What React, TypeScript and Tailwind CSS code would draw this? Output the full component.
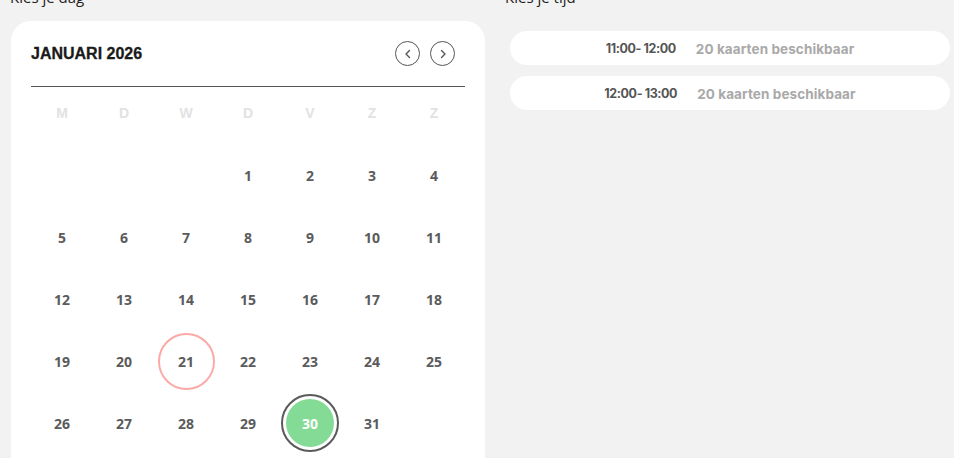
import React from "react";

// Day picker + time slot list
const weekDays = ["M", "D", "W", "D", "V", "Z", "Z"];

// January 2026 starts on a Thursday
const cells: (number | null)[] = [null, null, null, ...Array.from({ length: 31 }, (_, i) => i + 1)];

const timeSlots = [
  { time: "11:00- 12:00", available: "20 kaarten beschikbaar" },
  { time: "12:00- 13:00", available: "20 kaarten beschikbaar" },
];

const TODAY = 21;
const SELECTED = 30;

const NavButton: React.FC<{ dir: "prev" | "next" }> = ({ dir }) => (
  <button className="w-[25px] h-[25px] rounded-full border border-[#555] flex items-center justify-center bg-white">
    <svg width="10" height="10" viewBox="0 0 10 10" fill="none">
      <path
        d={dir === "prev" ? "M6.5 1.5 L3 5 L6.5 8.5" : "M3.5 1.5 L7 5 L3.5 8.5"}
        stroke="#555"
        strokeWidth="1.4"
        strokeLinecap="round"
        strokeLinejoin="round"
      />
    </svg>
  </button>
);

const DayCell: React.FC<{ day: number | null }> = ({ day }) => {
  if (day === null) return <div className="h-[62px]" />;

  if (day === SELECTED) {
    return (
      <div className="h-[62px] flex items-center justify-center">
        <div className="w-[58px] h-[58px] rounded-full border-2 border-[#5a5a5a] p-[3px]">
          <div className="w-full h-full rounded-full bg-[#84db96] flex items-center justify-center text-white">
            {day}
          </div>
        </div>
      </div>
    );
  }

  return (
    <div className="h-[62px] flex items-center justify-center">
      <div
        className={
          day === TODAY
            ? "w-[57px] h-[57px] rounded-full border-2 border-[#fbaaa8] flex items-center justify-center"
            : "w-[57px] h-[57px] flex items-center justify-center"
        }
      >
        {day}
      </div>
    </div>
  );
};

const Calendar: React.FC = () => (
  <div className="bg-white rounded-[20px] pt-5 px-5 pb-6">
    <div className="h-[25px] flex items-center justify-between mb-5">
      <h2 className="font-['Liberation_Sans',Arial,sans-serif] font-bold text-[16px] text-[#1a1a1a] [-webkit-text-stroke:0.3px_#1a1a1a]">
        JANUARI 2026
      </h2>
      <div className="flex gap-[10px] mr-[10px]">
        <NavButton dir="prev" />
        <NavButton dir="next" />
      </div>
    </div>

    <div className="border-t border-[#555]" />

    <div className="grid grid-cols-7 h-[52px] items-center font-['Liberation_Sans',Arial,sans-serif] font-bold text-[14px] text-[#e2e2e2]">
      {weekDays.map((d, i) => (
        <div key={i} className="text-center">
          {d}
        </div>
      ))}
    </div>

    <div className="grid grid-cols-7 mt-[5px] font-['Open_Sans',sans-serif] font-bold text-[14px] text-[#5b5b5b]">
      {cells.map((day, i) => (
        <DayCell key={i} day={day} />
      ))}
    </div>
  </div>
);

const TimeSlot: React.FC<{ time: string; available: string }> = ({ time, available }) => (
  <div className="h-[34px] bg-white rounded-full flex items-center justify-center gap-[20px] font-['Inter',sans-serif] font-bold pt-[3px]">
    <span className="text-[#555] text-[12.5px] tracking-[-0.4px]">{time}</span>
    <span className="text-[#a9a9a9] text-[13.5px] tracking-[0.1px]">{available}</span>
  </div>
);

export default function App() {
  return (
    <div className="w-[954px] h-[458px] bg-[#f2f2f2] overflow-hidden">
      <div className="flex -mt-[13px] font-['Open_Sans',sans-serif]">
        <div className="w-[474px] ml-[11px]">
          <div className="text-[15px] leading-5 text-[#222] -ml-[1px]">Kies je dag</div>
          <div className="mt-[14px]">
            <Calendar />
          </div>
        </div>

        <div className="ml-[20px] flex-1 pr-[4px]">
          <div className="text-[15px] leading-5 text-[#222]">Kies je tijd</div>
          <div className="mt-[24px] ml-[5px] flex flex-col gap-[11px]">
            {timeSlots.map((s) => (
              <TimeSlot key={s.time} time={s.time} available={s.available} />
            ))}
          </div>
        </div>
      </div>
    </div>
  );
}
